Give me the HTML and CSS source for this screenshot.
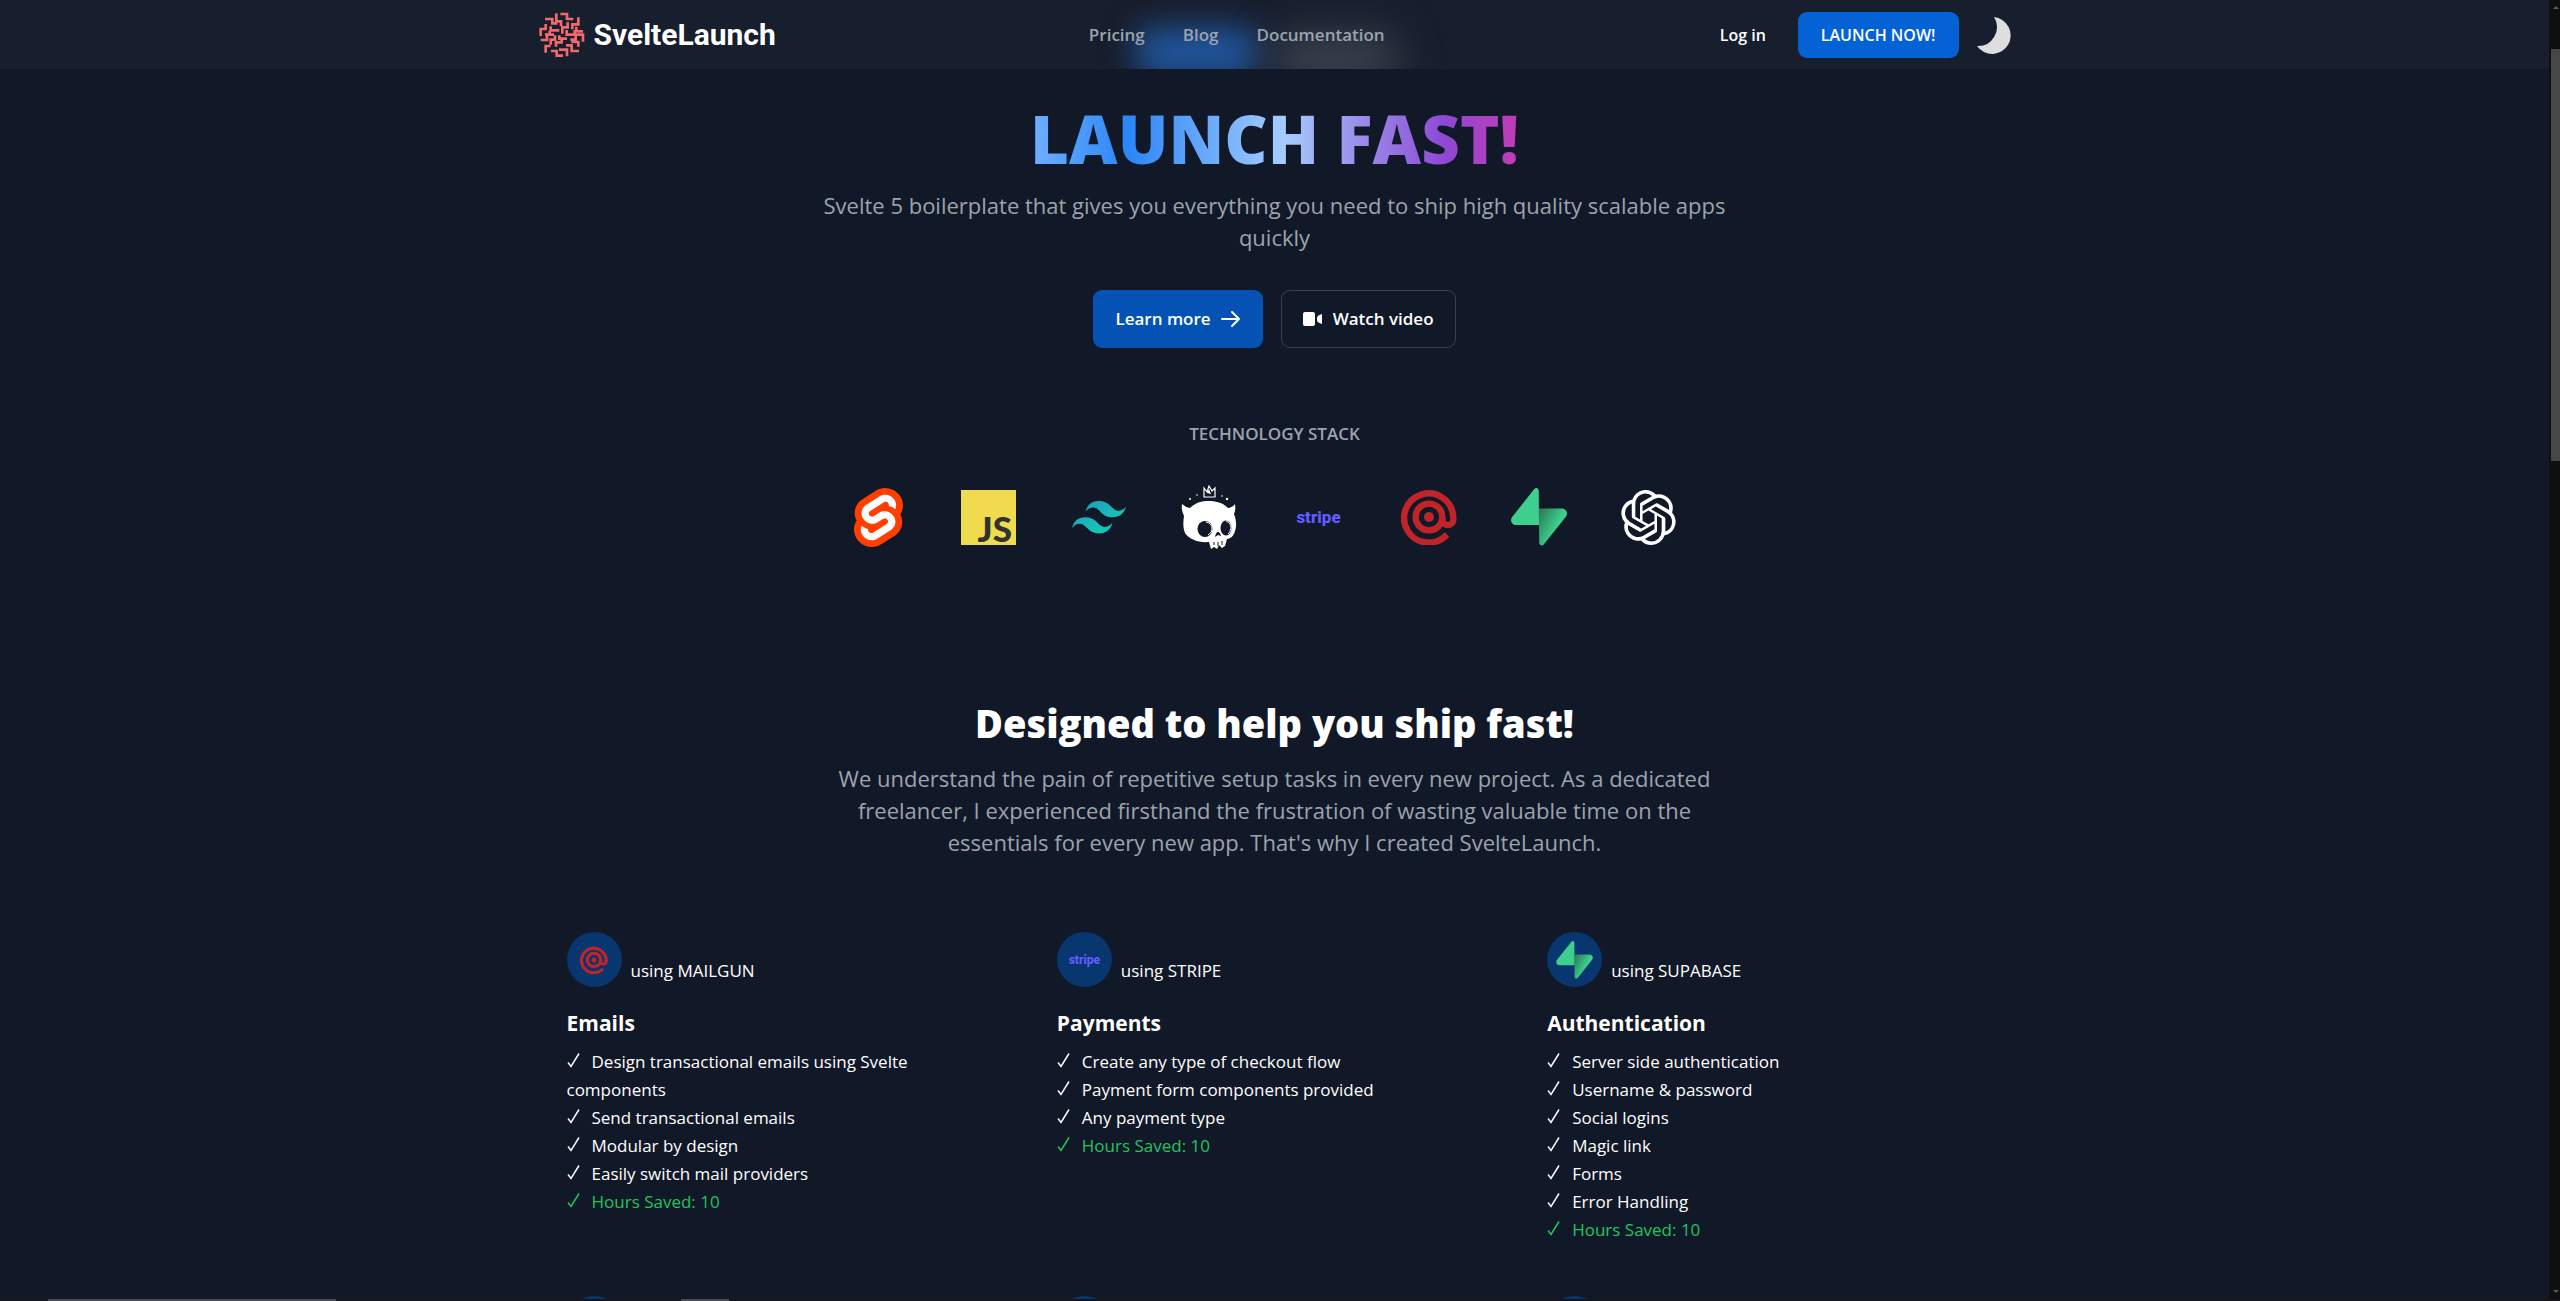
FILE: index.html
```html
<!DOCTYPE html>
<html lang="en">
<head>
    <meta charset="UTF-8">
    <meta name="viewport" content="width=device-width, initial-scale=1.0">
    <title>SvelteLaunch</title>
    <link rel="stylesheet" href="styles.css">
</head>
<body>
    <!-- Shared icons -->
    <svg class="sprite" aria-hidden="true">
        <defs>
            <linearGradient id="tw-grad" x1="0" y1="0" x2="1" y2="1">
                <stop offset="0" stop-color="#2298bd"/>
                <stop offset="1" stop-color="#0ed7b5"/>
            </linearGradient>
            <linearGradient id="supa-grad" gradientUnits="userSpaceOnUse" x1="54" y1="50" x2="92" y2="70">
                <stop offset="0" stop-color="#2a7f57"/>
                <stop offset="1" stop-color="#3ecf8e"/>
            </linearGradient>
        </defs>
        <symbol id="check" viewBox="0 0 14 16">
            <path d="M1 10.5 4 14.5 12 1.5" fill="none" stroke="currentColor" stroke-width="1.5"/>
        </symbol>
        <symbol id="mailgun" viewBox="0 0 56 56">
            <g fill="none" stroke="#c02428" stroke-width="6.4">
                <circle cx="28" cy="28" r="13.4"/>
                <path d="M46 45.500A24.600 24.600 0 1 1 52.300 28V31.500A5.600 5.600 0 0 1 41.300 31.500V28"/>
            </g>
            <circle cx="28" cy="28" r="5" fill="#c02428"/>
        </symbol>
        <symbol id="supabase" viewBox="0 0 109 113">
            <path fill="url(#supa-grad)" d="M63.7076 110.284C60.8481 113.885 55.0502 111.912 54.9813 107.314L53.9738 40.0627L99.1935 40.0627C107.384 40.0627 111.952 49.5228 106.859 55.9374L63.7076 110.284Z"/>
            <path fill="#3ecf8e" d="M45.317 2.07103C48.1765 -1.53037 53.9745 0.442937 54.0434 5.041L54.4849 72.2922H9.83113C1.64038 72.2922 -2.92775 62.8321 2.1655 56.4175L45.317 2.07103Z"/>
        </symbol>
    </svg>

    <div class="window">
        <div class="page">
            <header class="header">
                <span class="glow glow-blue"></span>
                <span class="glow glow-gray"></span>
                <div class="header-inner">
                    <a class="brand" href="#">
                        <svg class="brand-mark" viewBox="58 36 138 138" aria-hidden="true">
                            <g fill="none" stroke="#f0696b" stroke-width="8">
                                <path d="M122 42H142V57H161"/>
                                <path d="M110 40V64H124V78"/>
                                <path d="M76 57H98V70H113"/>
                                <path d="M176 52V73H158V88"/>
                                <path d="M144 67V82H128V101"/>
                                <path d="M78 72V87H63V108"/>
                                <path d="M93 79V91H119"/>
                                <path d="M170 80V94H190"/>
                                <path d="M141 90V104H165V90"/>
                                <path d="M76 104H90V92"/>
                                <path d="M63 120H82V104H103"/>
                                <path d="M93 134V119H106V106"/>
                                <path d="M119 106V116H142"/>
                                <path d="M152 119H168V104H190V125"/>
                                <path d="M78 158V138H93"/>
                                <path d="M94 153H111V167H130"/>
                                <path d="M109 140V127H126V119"/>
                                <path d="M118 149H142V169"/>
                                <path d="M139 136H156V153H178"/>
                                <path d="M155 126H176V140"/>
                            </g>
                        </svg>
                        <span class="brand-name">SvelteLaunch</span>
                    </a>
                    <nav class="nav">
                        <a href="#">Pricing</a>
                        <a href="#">Blog</a>
                        <a href="#">Documentation</a>
                    </nav>
                    <div class="header-actions">
                        <a class="login" href="#">Log in</a>
                        <button class="btn-launch" type="button">LAUNCH NOW!</button>
                        <button class="theme-toggle" type="button" aria-label="Toggle theme">
                            <svg viewBox="0 0 34 37" aria-hidden="true">
                                <path fill="#dedede" d="M17 0A18.500 18.500 0 1 1 0 29A19 19 0 0 0 17 0Z"/>
                            </svg>
                        </button>
                    </div>
                </div>
            </header>

            <main>
                <section class="hero">
                    <h1>LAUNCH FAST!</h1>
                    <p class="lead">Svelte 5 boilerplate that gives you everything you need to ship high quality scalable apps quickly</p>
                    <div class="hero-buttons">
                        <a class="btn btn-primary" href="#">
                            Learn more
                            <svg class="icon-arrow" viewBox="0 0 20 18" aria-hidden="true">
                                <path d="M1 9H18M11 2L18 9L11 16" fill="none" stroke="#fff" stroke-width="2" stroke-linecap="round" stroke-linejoin="round"/>
                            </svg>
                        </a>
                        <a class="btn btn-outline" href="#">
                            <svg class="icon-video" viewBox="0 0 20 16" aria-hidden="true">
                                <rect x="0" y="1" width="12" height="14" rx="2" fill="#fff"/>
                                <path d="M19 3V13L15.500 11.500Q14 10.500 14 9V7Q14 5.500 15.500 4.500Z" fill="#fff"/>
                            </svg>
                            Watch video
                        </a>
                    </div>
                </section>

                <section class="stack">
                    <h2 class="stack-title">TECHNOLOGY STACK</h2>
                    <ul class="stack-logos">
                        <li>
                            <svg width="49" height="59" viewBox="0 0 98.1 118" role="img" aria-label="Svelte">
                                <path fill="#ff3e00" d="M91.8 15.6C80.9-.1 59.2-4.7 43.6 5.2L16.1 22.8C8.6 27.5 3.4 35.2 1.9 43.9c-1.3 7.3-.2 14.8 3.3 21.3-2.4 3.6-4 7.6-4.7 11.8-1.6 8.9.5 18.1 5.7 25.4 11 15.700 32.600 20.300 48.200 10.400l27.500-17.500c7.500-4.700 12.700-12.400 14.200-21.100 1.300-7.300.2-14.800-3.300-21.300 2.400-3.600 4-7.600 4.700-11.800 1.700-9-.4-18.200-5.700-25.500"/>
                                <path fill="#fff" d="M40.9 103.900c-8.900 2.300-18.200-1.200-23.400-8.700-3.200-4.400-4.400-9.900-3.500-15.300.2-.9.4-1.700.6-2.600l.5-1.600 1.400 1c3.300 2.400 6.900 4.200 10.800 5.400l1 .3-.1 1c-.1 1.400.3 2.900 1.100 4.100 1.600 2.300 4.400 3.400 7.100 2.700.6-.2 1.200-.4 1.700-.7l27.400-17.500c1.400-.9 2.300-2.200 2.600-3.800.3-1.600-.1-3.300-1-4.600-1.600-2.300-4.400-3.300-7.100-2.600-.6.2-1.200.4-1.700.7l-10.500 6.700c-1.700 1.100-3.600 1.900-5.600 2.400-8.900 2.300-18.200-1.200-23.400-8.700-3.100-4.400-4.400-9.900-3.400-15.300.9-5.200 4.100-9.900 8.600-12.700l27.500-17.500c1.700-1.100 3.600-1.900 5.600-2.500 8.900-2.300 18.200 1.200 23.400 8.700 3.200 4.400 4.400 9.900 3.500 15.300-.2.9-.4 1.700-.7 2.600l-.5 1.600-1.400-1c-3.300-2.400-6.900-4.200-10.800-5.400l-1-.3.1-1c.1-1.400-.3-2.900-1.100-4.100-1.600-2.300-4.400-3.300-7.100-2.600-.6.2-1.200.4-1.700.7L32.400 46.100c-1.400.9-2.300 2.200-2.600 3.800s.1 3.300 1 4.600c1.600 2.300 4.400 3.300 7.100 2.600.6-.2 1.200-.4 1.700-.7l10.500-6.700c1.700-1.100 3.600-1.900 5.600-2.500 8.900-2.300 18.200 1.200 23.400 8.700 3.200 4.400 4.400 9.900 3.500 15.300-.9 5.200-4.100 9.900-8.600 12.700l-27.500 17.500c-1.700 1.100-3.600 1.900-5.600 2.500"/>
                            </svg>
                        </li>
                        <li><span class="js-logo">JS</span></li>
                        <li>
                            <svg width="54" height="33" viewBox="0 0 54 33" role="img" aria-label="Tailwind CSS">
                                <path fill="url(#tw-grad)" d="M27 0c-7.2 0-11.7 3.6-13.5 10.8 2.7-3.6 5.85-4.95 9.45-4.05 2.054.513 3.522 2.004 5.147 3.653C30.744 13.090 33.808 16.200 40.500 16.200c7.200 0 11.700-3.600 13.500-10.800-2.700 3.600-5.850 4.950-9.450 4.050-2.054-.513-3.522-2.004-5.147-3.653C36.756 3.110 33.692 0 27 0zM13.500 16.200C6.300 16.200 1.800 19.800 0 27c2.700-3.600 5.850-4.950 9.450-4.050 2.054.514 3.522 2.004 5.147 3.653C17.244 29.290 20.308 32.400 27 32.400c7.200 0 11.700-3.600 13.500-10.800-2.700 3.600-5.850 4.950-9.450 4.050-2.054-.513-3.522-2.004-5.147-3.653C23.256 19.310 20.192 16.200 13.500 16.200z"/>
                            </svg>
                        </li>
                        <li>
                            <svg width="56" height="64" viewBox="0 0 56 64" role="img" aria-label="Skeleton">
                                <path d="M23 12V3L26 7L28 1L31 6L34 3V12Z" fill="none" stroke="#fff" stroke-width="1.2"/>
                                <path d="M26 8L28 4L30 9Z" fill="#fff"/>
                                <g fill="#fff">
                                    <circle cx="9" cy="14" r="1"/>
                                    <circle cx="16" cy="10" r=".8"/>
                                    <circle cx="41" cy="11" r=".8"/>
                                    <circle cx="46" cy="14" r="1.200"/>
                                    <path d="M1 19Q4 22 9 23C15 17 21 16 28 16C36 16 42 18 47 23Q52 22 54 19Q55 25 53 29C55 34 56 41 54 46C53 51 49 54 46 54L44 61L41 63L38 60L36 64L33 62L30 64L28 57C17 58 8 54 4 48C2 43 2 38 3 31Q0 25 1 19Z"/>
                                </g>
                                <g fill="#111827">
                                    <ellipse cx="24" cy="44" rx="7.500" ry="8"/>
                                    <ellipse cx="45" cy="43" rx="5.500" ry="7.500"/>
                                    <path d="M34 52Q35 47 37 47Q39 47 40 51L37 50Z"/>
                                </g>
                                <path d="M25 37Q31 38 31 44Q31 48 27 50M45 36Q50 38 50 43Q49 48 47 49" fill="none" stroke="#fff" stroke-width="1"/>
                                <path d="M33 57V60M37 57V61M41 56V60" stroke="#111827" stroke-width="1"/>
                            </svg>
                        </li>
                        <li><span class="stripe-logo">stripe</span></li>
                        <li><svg width="56" height="56" role="img" aria-label="Mailgun"><use href="#mailgun"/></svg></li>
                        <li><svg width="56" height="58" role="img" aria-label="Supabase"><use href="#supabase"/></svg></li>
                        <li>
                            <svg width="55" height="55" viewBox="0 0 24 24" role="img" aria-label="OpenAI">
                                <path fill="#fff" d="M22.2819 9.8211a5.9847 5.9847 0 0 0-.5157-4.9108 6.0462 6.0462 0 0 0-6.5098-2.9A6.0651 6.0651 0 0 0 4.9807 4.1818a5.9847 5.9847 0 0 0-3.9977 2.9 6.0462 6.0462 0 0 0 .7427 7.0966 5.98 5.98 0 0 0 .511 4.9107 6.051 6.051 0 0 0 6.5146 2.9001A5.9847 5.9847 0 0 0 13.2599 24a6.0557 6.0557 0 0 0 5.7718-4.2058 5.9894 5.9894 0 0 0 3.9977-2.9001 6.0557 6.0557 0 0 0-.7475-7.0729zm-9.022 12.6081a4.4755 4.4755 0 0 1-2.8764-1.0408l.1419-.0804 4.7783-2.7582a.7948.7948 0 0 0 .3927-.6813v-6.7369l2.02 1.1686a.071.071 0 0 1 .038.052v5.5826a4.504 4.504 0 0 1-4.4945 4.4944zm-9.6607-4.1254a4.4708 4.4708 0 0 1-.5346-3.0137l.142.0852 4.783 2.7582a.7712.7712 0 0 0 .7806 0l5.8428-3.3685v2.3324a.0804.0804 0 0 1-.0332.0615L9.74 19.9502a4.4992 4.4992 0 0 1-6.1408-1.6464zM2.3408 7.8956a4.485 4.485 0 0 1 2.3655-1.9728V11.6a.7664.7664 0 0 0 .3879.6765l5.8144 3.3543-2.0201 1.1685a.0757.0757 0 0 1-.071 0l-4.8303-2.7865A4.504 4.504 0 0 1 2.3408 7.872zm16.5963 3.8558L13.1038 8.364 15.1192 7.2a.0757.0757 0 0 1 .071 0l4.8303 2.7913a4.4944 4.4944 0 0 1-.6765 8.1042v-5.6772a.79.79 0 0 0-.407-.667zm2.0107-3.0231l-.142-.0852-4.7735-2.7818a.7759.7759 0 0 0-.7854 0L9.409 9.2297V6.8974a.0662.0662 0 0 1 .0284-.0615l4.8303-2.7866a4.4992 4.4992 0 0 1 6.6802 4.66zM8.3065 12.863l-2.02-1.1638a.0804.0804 0 0 1-.038-.0567V6.0742a4.4992 4.4992 0 0 1 7.3757-3.4537l-.142.0805L8.704 5.459a.7948.7948 0 0 0-.3927.6813zm1.0976-2.3654l2.602-1.4998 2.6069 1.4998v2.9994l-2.5974 1.4997-2.6067-1.4997Z"/>
                            </svg>
                        </li>
                    </ul>
                </section>

                <section class="features">
                    <div class="features-intro">
                        <h2>Designed to help you ship fast!</h2>
                        <p>We understand the pain of repetitive setup tasks in every new project. As a dedicated freelancer, I experienced firsthand the frustration of wasting valuable time on the essentials for every new app. That's why I created SvelteLaunch.</p>
                    </div>
                    <div class="feature-grid">
                        <article class="feature">
                            <div class="feature-head">
                                <span class="badge"><svg width="28" height="28" aria-hidden="true"><use href="#mailgun"/></svg></span>
                                <span class="using">using MAILGUN</span>
                            </div>
                            <h3>Emails</h3>
                            <ul class="checks">
                                <li><svg class="check"><use href="#check"/></svg>Design transactional emails using Svelte components</li>
                                <li><svg class="check"><use href="#check"/></svg>Send transactional emails</li>
                                <li><svg class="check"><use href="#check"/></svg>Modular by design</li>
                                <li><svg class="check"><use href="#check"/></svg>Easily switch mail providers</li>
                                <li class="saved"><svg class="check"><use href="#check"/></svg>Hours Saved: 10</li>
                            </ul>
                        </article>
                        <article class="feature">
                            <div class="feature-head">
                                <span class="badge"><span class="stripe-logo small">stripe</span></span>
                                <span class="using">using STRIPE</span>
                            </div>
                            <h3>Payments</h3>
                            <ul class="checks">
                                <li><svg class="check"><use href="#check"/></svg>Create any type of checkout flow</li>
                                <li><svg class="check"><use href="#check"/></svg>Payment form components provided</li>
                                <li><svg class="check"><use href="#check"/></svg>Any payment type</li>
                                <li class="saved"><svg class="check"><use href="#check"/></svg>Hours Saved: 10</li>
                            </ul>
                        </article>
                        <article class="feature">
                            <div class="feature-head">
                                <span class="badge"><svg width="37" height="38" aria-hidden="true"><use href="#supabase"/></svg></span>
                                <span class="using">using SUPABASE</span>
                            </div>
                            <h3>Authentication</h3>
                            <ul class="checks">
                                <li><svg class="check"><use href="#check"/></svg>Server side authentication</li>
                                <li><svg class="check"><use href="#check"/></svg>Username &amp; password</li>
                                <li><svg class="check"><use href="#check"/></svg>Social logins</li>
                                <li><svg class="check"><use href="#check"/></svg>Magic link</li>
                                <li><svg class="check"><use href="#check"/></svg>Forms</li>
                                <li><svg class="check"><use href="#check"/></svg>Error Handling</li>
                                <li class="saved"><svg class="check"><use href="#check"/></svg>Hours Saved: 10</li>
                            </ul>
                        </article>
                        <!-- next row starts at the fold -->
                        <article class="feature"><span class="badge"></span></article>
                        <article class="feature"><span class="badge"></span></article>
                        <article class="feature"><span class="badge"></span></article>
                    </div>
                </section>
            </main>
        </div>
        <div class="scrollbar">
            <span class="arrow arrow-up"></span>
            <span class="thumb"></span>
            <span class="arrow arrow-down"></span>
        </div>
    </div>
    <div class="shelf">
        <span class="shelf-wide"></span>
        <span class="shelf-short"></span>
    </div>
</body>
</html>
```
FILE: styles.css
```css
* {
    box-sizing: border-box;
}
body {
    margin: 0;
    height: 100vh;
    display: flex;
    flex-direction: column;
    overflow: hidden;
    background: #111827;
    color: #fff;
    font-family: "Open Sans", "Noto Sans", sans-serif;
    font-size: 17px;
    line-height: 28px;
}
h1, h2, h3, p, ul {
    margin: 0;
    padding: 0;
}
ul {
    list-style: none;
}
a {
    color: inherit;
    text-decoration: none;
}
button {
    font: inherit;
    color: inherit;
    border: none;
    padding: 0;
    background: none;
    cursor: pointer;
}
svg {
    display: block;
}
.sprite {
    position: absolute;
    width: 0;
    height: 0;
}
.window {
    flex: 1;
    min-height: 0;
    display: flex;
}
.page {
    flex: 1;
    min-width: 0;
    overflow: hidden;
}

/* Header */
.header {
    position: relative;
    overflow: hidden;
    background: #171e2d;
}
.header-inner {
    position: relative;
    max-width: 1472px;
    margin: 0 auto;
    padding: 12px 0 11px;
    display: flex;
    justify-content: space-between;
    align-items: center;
}
.glow {
    position: absolute;
    border-radius: 20px;
    filter: blur(16px);
}
.glow-blue {
    left: calc(50% - 140px);
    top: 28px;
    width: 124px;
    height: 50px;
    background: #20569d;
}
.glow-gray {
    left: calc(50% - 4px);
    top: 34px;
    width: 128px;
    height: 50px;
    background: #3a424e;
    filter: blur(20px);
}
.brand {
    display: flex;
    align-items: center;
    gap: 9px;
}
.brand-mark {
    width: 46px;
    height: 46px;
}
.brand-name {
    font-family: Roboto, "Liberation Sans", sans-serif;
    font-size: 30px;
    font-weight: 700;
    line-height: 40px;
}
.nav {
    display: flex;
    gap: 38px;
    color: #9ca3af;
    font-weight: 600;
}
.header-actions {
    display: flex;
    align-items: center;
    padding-left: 22px;
    font-size: 16px;
    font-weight: 600;
}
.btn-launch {
    margin: 0 18px 0 32px;
    padding: 9px 23px;
    border-radius: 9px;
    background: #0462d4;
}
.theme-toggle svg {
    width: 34px;
    height: 37px;
}

/* Hero */
.hero {
    max-width: 920px;
    margin: 0 auto;
    padding-top: 36px;
    text-align: center;
}
h1 {
    width: fit-content;
    margin: 0 auto 17px;
    font-size: 67px;
    font-weight: 800;
    line-height: 67px;
    color: transparent;
    background: linear-gradient(90deg, #6fb0ff 0%, #2b86f7 20%, #a5ccff 52%, #8e48d3 85%, #c23bb5 100%);
    -webkit-background-clip: text;
    background-clip: text;
}
.lead,
.features-intro p {
    color: #9ca3af;
    font-size: 22px;
    line-height: 32px;
}
.hero-buttons {
    display: flex;
    justify-content: center;
    gap: 18px;
    margin-top: 37px;
}
.btn {
    display: flex;
    align-items: center;
    gap: 10px;
    padding: 14px 21px;
    border: 1px solid transparent;
    border-radius: 9px;
    font-weight: 600;
}
.btn-primary {
    background: #0453b4;
}
.btn-outline {
    border-color: #374151;
}
.icon-arrow {
    width: 20px;
    height: 18px;
}
.icon-video {
    width: 20px;
    height: 16px;
}

/* Technology stack */
.stack {
    max-width: 902px;
    margin: 0 auto;
    padding-top: 72px;
    text-align: center;
}
.stack-title {
    font-size: 17px;
    font-weight: 600;
    color: #9ca3af;
}
.stack-logos {
    display: grid;
    grid-template-columns: repeat(8, 1fr);
    align-items: center;
    margin-top: 36px;
    padding-right: 22px;
    height: 66px;
}
.stack-logos li {
    display: flex;
    justify-content: center;
}
.js-logo {
    display: flex;
    align-items: flex-end;
    justify-content: flex-end;
    width: 55px;
    height: 55px;
    padding-right: 4px;
    background: #f0db4f;
    color: #323330;
    font-family: Lato, sans-serif;
    font-size: 35px;
    font-weight: 900;
    line-height: 33px;
}
.stripe-logo {
    color: #635bff;
    font-family: Roboto, sans-serif;
    font-size: 17px;
    font-weight: 800;
    line-height: 20px;
}
.stripe-logo.small {
    font-size: 12px;
}

/* Features */
.features {
    max-width: 1472px;
    margin: 0 auto;
    padding: 150px 28px 0;
}
.features-intro {
    max-width: 884px;
    margin: 0 auto 74px;
    text-align: center;
}
.features-intro h2 {
    margin-bottom: 16px;
    font-size: 38px;
    font-weight: 800;
    line-height: 46px;
}
.feature-grid {
    display: grid;
    grid-template-columns: repeat(3, 1fr);
    gap: 52px 55px;
}
.feature-head {
    display: flex;
    align-items: flex-end;
    gap: 9px;
    margin-bottom: 20px;
}
.using {
    padding-bottom: 2px;
}
.badge {
    display: flex;
    align-items: center;
    justify-content: center;
    width: 55px;
    height: 55px;
    border-radius: 50%;
    background: #08366f;
}
.feature h3 {
    margin-bottom: 9px;
    font-size: 21px;
    font-weight: 700;
    line-height: 32px;
}
.check {
    display: inline-block;
    width: 14px;
    height: 16px;
    margin-right: 11px;
}
.saved {
    color: #22c55e;
}

/* Scrollbar and bottom edge of the window */
.scrollbar {
    display: flex;
    flex-direction: column;
    align-items: center;
    width: 11px;
    padding: 6px 0 6px 2px;
    background: #0f0f0f;
}
.arrow {
    border: 3px solid transparent;
}
.arrow-up {
    border-top-width: 0;
    border-bottom-color: #5a5a58;
}
.arrow-down {
    margin-top: auto;
    border-bottom-width: 0;
    border-top-color: #5a5a58;
}
.thumb {
    width: 100%;
    height: 32%;
    margin-top: 40px;
    background: #474745;
}
.shelf {
    display: flex;
    gap: 345px;
    height: 2px;
    padding-left: 48px;
    background: #16161a;
}
.shelf-wide {
    width: 288px;
    background: #4a4a50;
}
.shelf-short {
    width: 48px;
    background: #4a4a50;
}
```
